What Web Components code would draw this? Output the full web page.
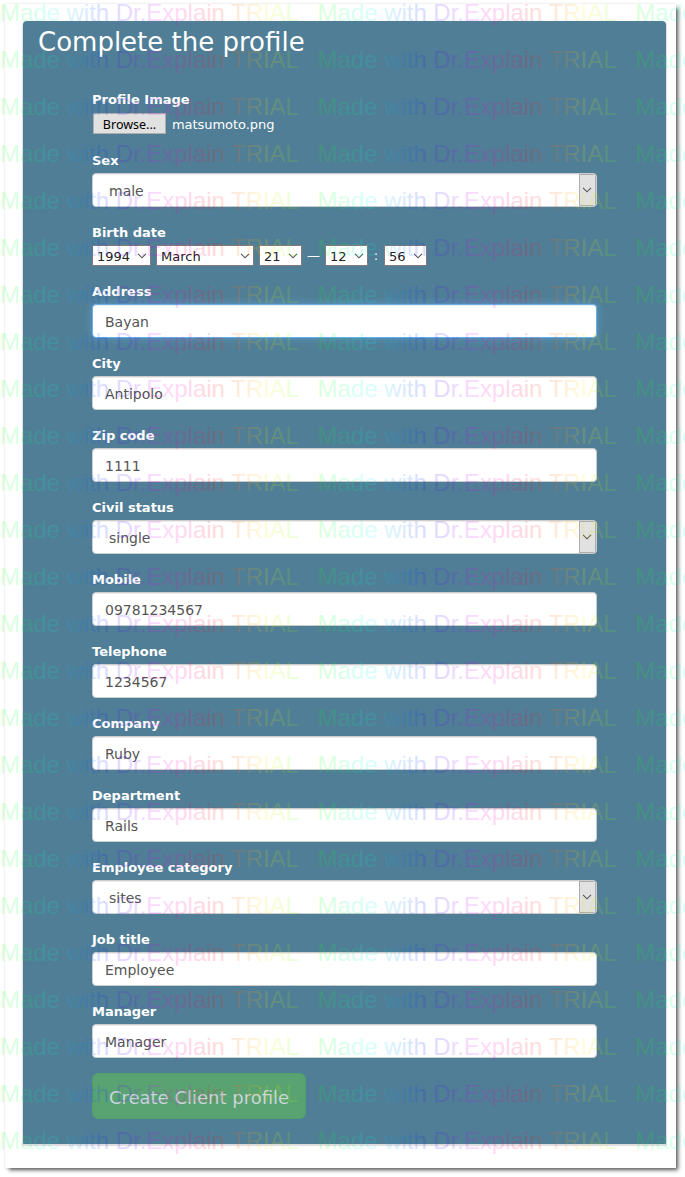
<!DOCTYPE html>
<html lang="en">
<head>
<meta charset="utf-8">
<title>Complete the profile</title>
<style>
html,body{margin:0;background:#fff;height:1177px;overflow:hidden}
body{font-family:"DejaVu Sans",Verdana,sans-serif;position:relative}
</style>
</head>
<body>
<profile-page>
  <form-row label="Profile Image"><file-picker name="matsumoto.png"></file-picker></form-row>
  <form-row label="Sex"><select-field>male</select-field></form-row>
  <form-row label="Birth date"><date-time-field></date-time-field></form-row>
  <form-row label="Address"><text-field focused>Bayan</text-field></form-row>
  <form-row label="City"><text-field>Antipolo</text-field></form-row>
  <form-row label="Zip code"><text-field>1111</text-field></form-row>
  <form-row label="Civil status"><select-field>single</select-field></form-row>
  <form-row label="Mobile"><text-field>09781234567</text-field></form-row>
  <form-row label="Telephone"><text-field>1234567</text-field></form-row>
  <form-row label="Company"><text-field>Ruby</text-field></form-row>
  <form-row label="Department"><text-field>Rails</text-field></form-row>
  <form-row label="Employee category"><select-field>sites</select-field></form-row>
  <form-row label="Job title"><text-field>Employee</text-field></form-row>
  <form-row label="Manager"><text-field>Manager</text-field></form-row>
  <submit-button>Create Client profile</submit-button>
</profile-page>
<trial-watermark></trial-watermark>
<script>
const define = (name, html) => customElements.define(name, class extends HTMLElement {
  constructor() {
    super();
    this.attachShadow({mode: 'open'}).innerHTML = typeof html === 'function' ? html(this) : html;
  }
});
const chevron = '<svg width="10" height="6" viewBox="0 0 10 6"><path d="M1 .8 5 4.8 9 .8" fill="none" stroke="#555" stroke-width="1.1"/></svg>';

define('profile-page', `<style>
:host{display:block;padding:4px 9px 9px 5px}
.window{box-sizing:border-box;width:671px;height:1164px;padding:17px 10px 0 18px;background:#fff;box-shadow:3px 3px 4px -1px #555,0 0 2px #ddd}
.panel{box-sizing:border-box;width:643px;height:1123px;background:#507e96;border-radius:4px 4px 1px 1px;box-shadow:0 1px 1px 1px #dedbdf;padding:0 69px}
h1{margin:0 0 0 -54px;height:68px;font-size:26px;line-height:42px;font-weight:400;color:#fff;white-space:nowrap}
</style><div class="window"><div class="panel"><h1>Complete the profile</h1><slot></slot></div></div>`);

define('form-row', el => `<style>
:host{display:block;margin-bottom:15px}
.label{height:19px;line-height:22px;margin-bottom:4px;color:#fff;font-size:13px;font-weight:700;white-space:nowrap}
</style><div class="label">${el.getAttribute('label')}</div><slot></slot>`);

define('text-field', `<style>
:host{display:block;box-sizing:border-box;width:505px;height:34px;padding:0 12px;border:1px solid #ccc;border-radius:4px;background:#fff;color:#555;font-size:14px;line-height:34px;box-shadow:inset 0 1px 1px rgba(0,0,0,.075)}
:host([focused]){border-color:#66afe9;box-shadow:inset 0 1px 1px rgba(0,0,0,.075),0 0 8px rgba(102,175,233,.6)}
</style><slot></slot>`);

define('select-field', `<style>
:host{display:flex;justify-content:space-between;box-sizing:border-box;width:505px;height:34px;padding-left:16px;border:1px solid #ccc;border-radius:4px;background:#fff;color:#555;font-size:14px;line-height:34px;box-shadow:inset 0 1px 1px rgba(0,0,0,.075);overflow:hidden}
.arrow{box-sizing:border-box;width:17px;height:32px;display:flex;align-items:center;justify-content:center;padding-right:1px;background:#e1e1e1;border:1px solid #adadad}
</style><span><slot></slot></span><span class="arrow">${chevron}</span>`);

define('file-picker', el => `<style>
:host{display:flex;height:23px;align-items:center;gap:6px;padding-left:1px;color:#fff;font-size:13px}
.button{box-sizing:border-box;width:73px;height:21px;border:1px solid #adadad;background:#e1e1e1;color:#000;font:12.5px/21px "Noto Sans","Open Sans",sans-serif;text-align:center}
.name{line-height:23px;padding-top:2px;letter-spacing:-.05px}
</style><span class="button">Browse...</span><span class="name">${el.getAttribute('name')}</span>`);

define('small-select', `<style>
:host{box-sizing:border-box;height:21px;display:flex;align-items:center;justify-content:space-between;border:1px solid #857a78;background:#fff;padding:1px 3px 0 4px;color:#222;font-size:13px;line-height:19px}
</style><slot></slot>${chevron}`);

define('date-time-field', `<style>
:host{display:flex;height:21px;font-size:13px;color:#fff;line-height:22px}
.gap{text-align:center}
</style><small-select style="width:59px">1994</small-select><span style="width:5px"></span><small-select style="width:98px">March</small-select><span style="width:5px"></span><small-select style="width:43px">21</small-select><span class="gap" style="width:23px">—</span><small-select style="width:43px">12</small-select><span class="gap" style="width:16px">:</span><small-select style="width:43px">56</small-select>`);

define('submit-button', `<style>
:host{display:flex;box-sizing:border-box;width:214px;height:46px;align-items:center;justify-content:center;background:#59a373;border:1px solid #50a068;border-radius:6px;color:#c8d5dc;font-size:18px;white-space:nowrap;padding-top:2px}
</style><slot></slot>`);

define('trial-watermark', () => {
  let stops = '', rows = '';
  for (let i = 0; i <= 12; i++) stops += `<stop offset="${i / 12}" stop-color="hsl(${(116 + i * 30) % 360},100%,50%)"/>`;
  for (let r = 0; r < 25; r++) for (let c = 0; c < 3; c++)
    rows += `<text x="${c * 317.6}" y="${21 + r * 47}">Made with Dr.Explain TRIAL</text>`;
  return `<style>
:host{display:block;position:absolute;inset:0;pointer-events:none;overflow:hidden}
svg{display:block}
text{font:24px "Liberation Sans",Arial,sans-serif;fill:url(#hue);opacity:.14;letter-spacing:-.03px}
</style><svg width="685" height="1177"><defs><linearGradient id="hue" gradientUnits="userSpaceOnUse" x1="0" y1="0" x2="318" y2="0" spreadMethod="repeat">${stops}</linearGradient></defs>${rows}</svg>`;
});
</script>
</body>
</html>
